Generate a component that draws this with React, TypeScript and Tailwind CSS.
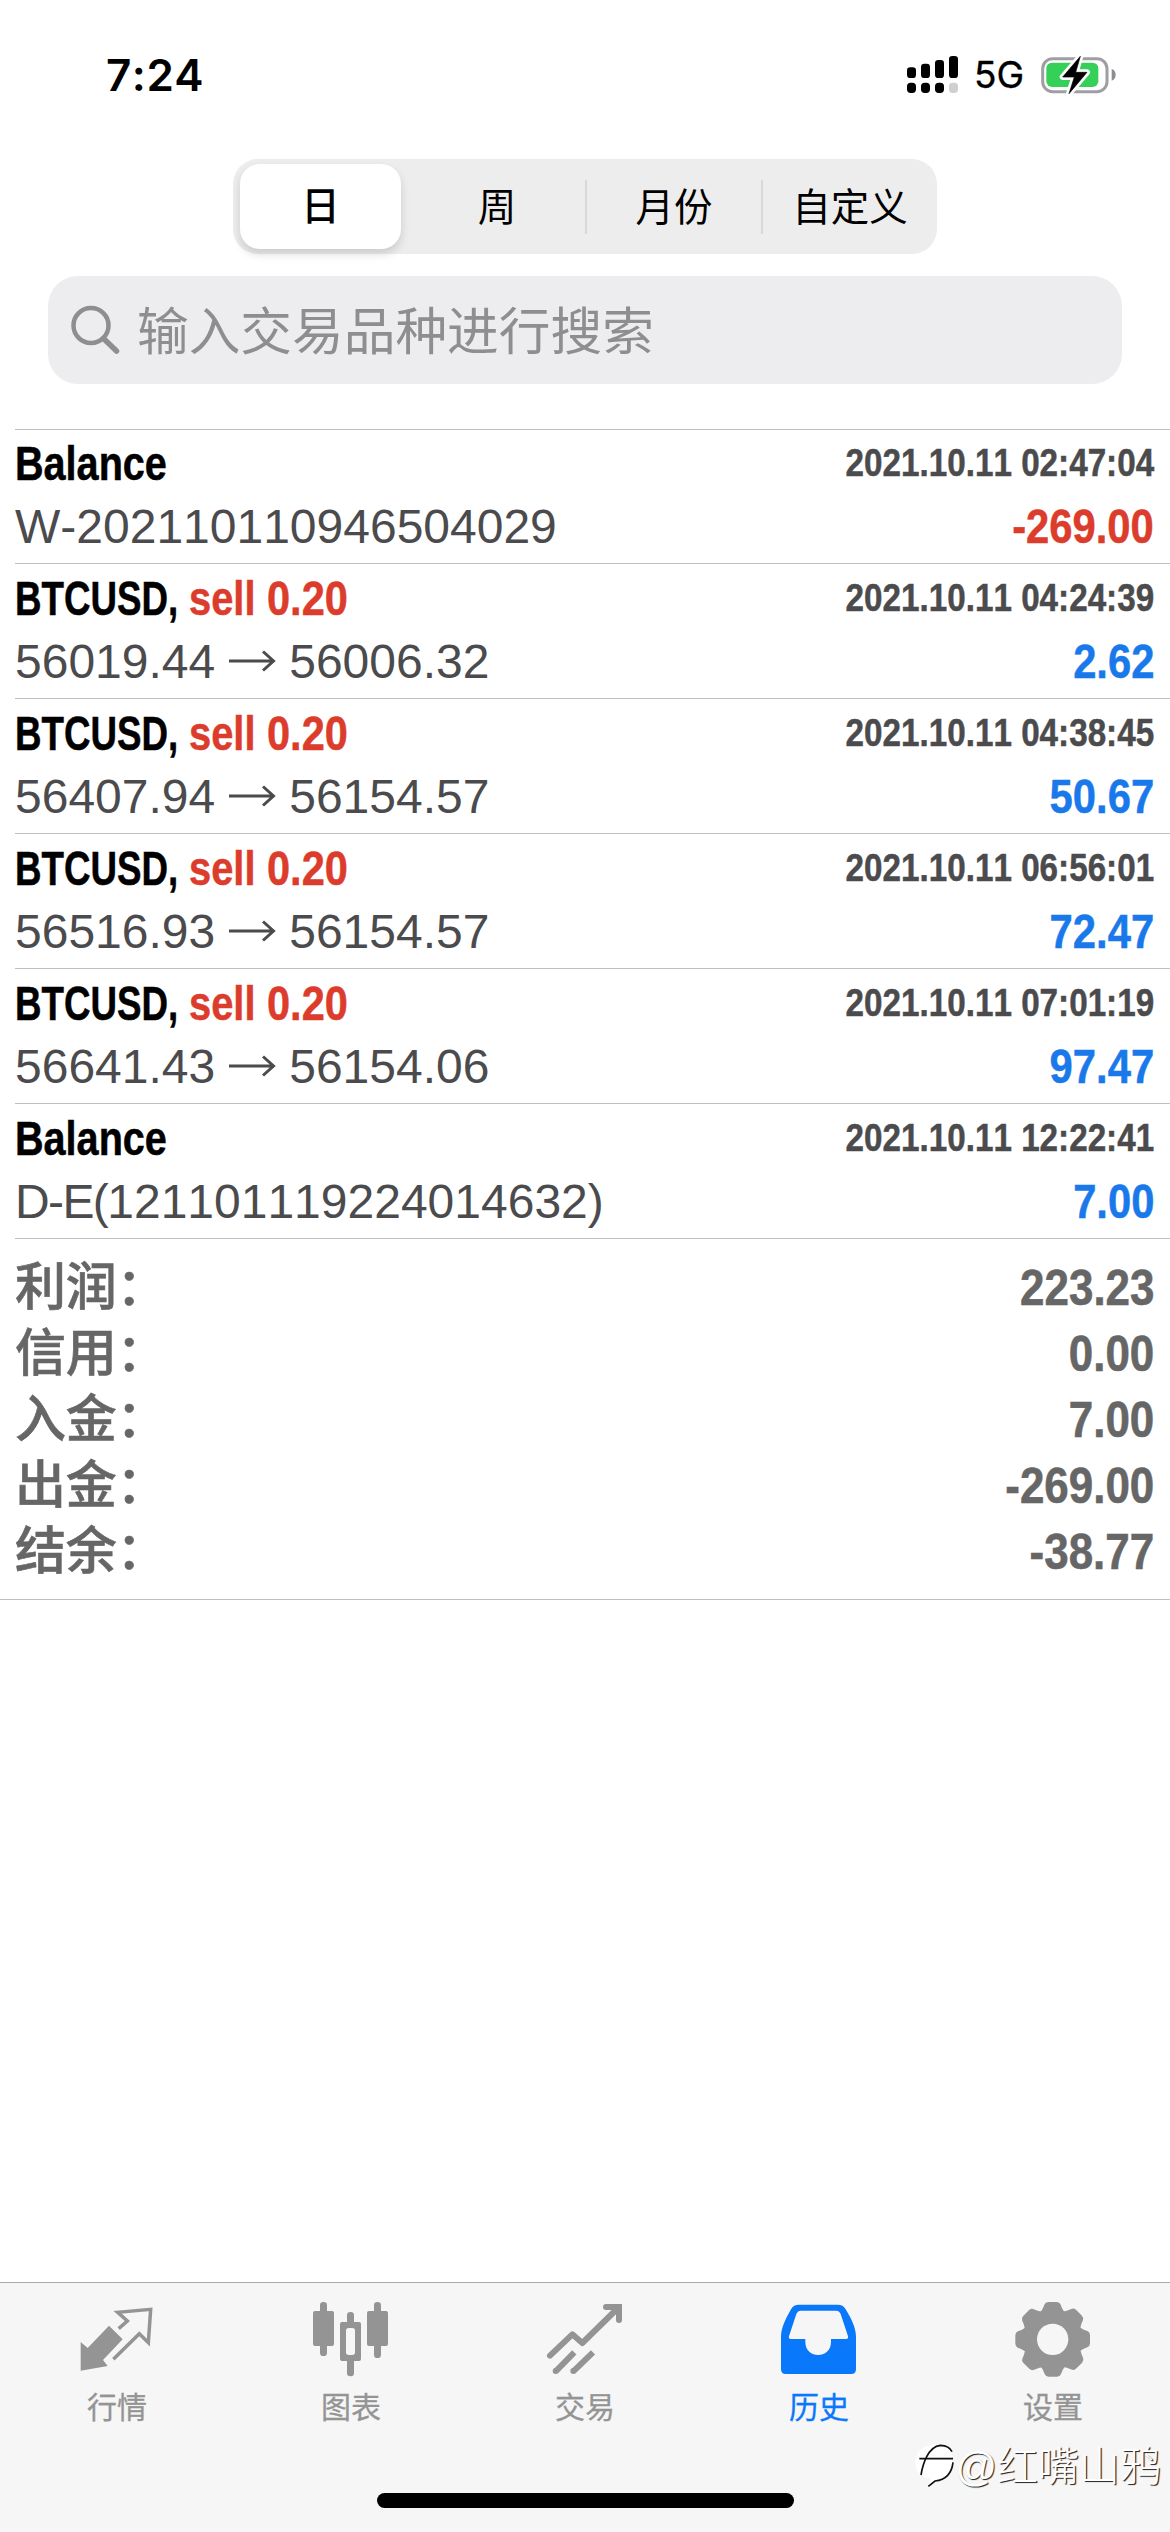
import React from "react";

type Deal = {
  symbol: string;
  side?: string;
  volume?: string;
  time: string;
  from?: string;
  to?: string;
  note?: React.ReactNode;
  profit: string;
};

const deals: Deal[] = [
  { symbol: "Balance", time: "2021.10.11 02:47:04", note: "W-202110110946504029", profit: "-269.00" },
  { symbol: "BTCUSD,", side: "sell", volume: "0.20", time: "2021.10.11 04:24:39", from: "56019.44", to: "56006.32", profit: "2.62" },
  { symbol: "BTCUSD,", side: "sell", volume: "0.20", time: "2021.10.11 04:38:45", from: "56407.94", to: "56154.57", profit: "50.67" },
  { symbol: "BTCUSD,", side: "sell", volume: "0.20", time: "2021.10.11 06:56:01", from: "56516.93", to: "56154.57", profit: "72.47" },
  { symbol: "BTCUSD,", side: "sell", volume: "0.20", time: "2021.10.11 07:01:19", from: "56641.43", to: "56154.06", profit: "97.47" },
  {
    symbol: "Balance",
    time: "2021.10.11 12:22:41",
    note: (
      <span>
        <span className="tracking-[-1.6px]">D-E(</span>121101119224014632)
      </span>
    ),
    profit: "7.00",
  },
];

const totals = [
  { label: "利润：", value: "223.23" },
  { label: "信用：", value: "0.00" },
  { label: "入金：", value: "7.00" },
  { label: "出金：", value: "-269.00" },
  { label: "结余：", value: "-38.77" },
];

const StatusBar = () => (
  <div className="h-[159px] flex justify-between pl-[106px] pr-[54px] pt-[50px]">
    <span className="font-['Inter'] font-semibold text-[44px] leading-[50px] tracking-[0.5px]">7:24</span>
    <div className="flex h-[50px] items-center">
      <svg className="w-[52px] h-[38px]" viewBox="0 0 156 114">
        <rect x="0" y="34" width="27" height="32" rx="10" />
        <rect x="42" y="23" width="27" height="43" rx="10" />
        <rect x="84" y="12" width="27" height="54" rx="10" />
        <rect x="126" y="0" width="27" height="66" rx="10" />
        <rect x="0" y="80" width="27" height="31" rx="11" />
        <rect x="42" y="80" width="27" height="31" rx="11" />
        <rect x="84" y="80" width="27" height="31" rx="11" />
        <rect x="126" y="80" width="27" height="31" rx="11" fill="#cfcfcf" />
      </svg>
      <span className="font-['Inter'] text-[37px] leading-[52px] ml-[15px] w-[66px] [-webkit-text-stroke:0.4px]">5G</span>
      <svg className="w-[76px] h-[40px]" viewBox="478 72 228 120">
        <rect x="486" y="83" width="193" height="99" rx="30" fill="none" stroke="#a19ea3" strokeWidth="9" />
        <rect x="497" y="95" width="156" height="73" rx="17" fill="#35d058" />
        <path d="M693 114c16 4 16 31 0 35z" fill="#8e8c90" />
        <path d="M599 76 546 138h35l-16 50 54-64h-34z" stroke="#fff" strokeWidth="18" strokeLinejoin="round" />
        <path d="M599 76 546 138h35l-16 50 54-64h-34z" stroke="#000" strokeWidth="2" strokeLinejoin="round" />
      </svg>
    </div>
  </div>
);

const Periods = () => (
  <div className="mx-auto w-[704px] h-[95px] rounded-[25px] bg-[#ededed] grid grid-cols-4 items-center text-[38.5px] text-black text-center">
    <div className="ml-[7px] mr-[8px] h-[85px] leading-[86px] rounded-[20px] bg-white font-medium shadow-[0_5px_10px_rgba(0,0,0,0.14)]">日</div>
    <div className="h-[54px] leading-[55px]">周</div>
    <div className="h-[54px] leading-[55px] border-l-2 border-[#d8d8d9]">月份</div>
    <div className="h-[54px] leading-[55px] border-l-2 border-[#d8d8d9]">自定义</div>
  </div>
);

const Search = () => (
  <div className="mx-[48px] mt-[22px] h-[108px] rounded-[30px] bg-[#ededef] flex items-center pl-[23px] text-[#8e8e90]">
    <svg className="w-[50px] h-[50px]" viewBox="0 0 50 50" fill="none" stroke="currentColor">
      <circle cx="20" cy="20.5" r="17.5" strokeWidth="4.5" />
      <path d="M32.5 33.5 45.5 46" strokeWidth="5.5" strokeLinecap="round" />
    </svg>
    <span className="ml-[16px] mt-[3px] text-[51.7px] leading-[60px] whitespace-nowrap">输入交易品种进行搜索</span>
  </div>
);

const DealRow = ({ deal }: { deal: Deal }) => (
  <div className="ml-[15px] pr-[16px] h-[135px] border-t border-[#bfbfc1] pt-[3px] first:h-[134px] first:pt-[2px]">
    <div className="flex justify-between h-[63px] font-bold whitespace-nowrap [-webkit-text-stroke:0.5px]">
      <div className="flex text-[48px] leading-[63px]">
        {deal.side ? (
          <>
            <span className="w-[174px] origin-left scale-x-[0.765] text-black">{deal.symbol}</span>
            <span className="w-[78px] origin-left scale-x-[0.83] text-[#dc3c2c]">{deal.side}</span>
            <span className="w-[81px] origin-left scale-x-[0.865] text-[#dc3c2c]">{deal.volume}</span>
          </>
        ) : (
          <span className="origin-left scale-x-[0.825] text-black">{deal.symbol}</span>
        )}
      </div>
      <span className="origin-right scale-x-[0.852] text-[39px] leading-[61px] text-[#4b4b4d]">{deal.time}</span>
    </div>
    <div className="flex justify-between h-[63px] text-[48px] leading-[63px] whitespace-nowrap">
      <div className="flex items-center text-[#4b4b4d]">
        {deal.note ?? (
          <>
            <span>{deal.from}</span>
            <svg className="w-[48px] h-[22px] mx-[13px] mb-px" viewBox="0 0 48 22" fill="none" stroke="currentColor" strokeWidth="3">
              <path d="M1 11H45M35 1.5 45.5 11 35 20.5" />
            </svg>
            <span>{deal.to}</span>
          </>
        )}
      </div>
      <span
        className={`origin-right scale-x-[0.87] font-bold [-webkit-text-stroke:0.5px] ${
          deal.profit.startsWith("-") ? "text-[#dc3c2c]" : "text-[#1a79ea]"
        }`}
      >
        {deal.profit}
      </span>
    </div>
  </div>
);

const Totals = () => (
  <div className="relative h-[362px] border-b border-[#bfbfc1] pl-[15px] pr-[16px] pt-[17px] text-[#666]">
    <div className="absolute left-[15px] right-0 top-0 h-px bg-[#bfbfc1]" />
    {totals.map((t) => (
      <div key={t.label} className="flex justify-between h-[66px] leading-[66px] whitespace-nowrap [-webkit-text-stroke:0.6px]">
        <span className="text-[51px] font-medium tracking-[-0.3px]">{t.label}</span>
        <span className="origin-right scale-x-[0.87] text-[50.5px] font-bold">{t.value}</span>
      </div>
    ))}
  </div>
);

const QuotesIcon = () => (
  <svg className="size-[80px]" viewBox="81 84 240 240">
    <path d="M177 167 218 208 159 270 173 288 92 302V216L113 234Z" fill="currentColor" />
    <path d="M206 176 232 153 203 127 302 118 295 218 268 191 190 268" fill="none" stroke="currentColor" strokeWidth="10.5" />
  </svg>
);

const ChartIcon = () => (
  <svg className="size-[80px]" viewBox="783 84 240 240" fill="currentColor">
    <rect x="810" y="96" width="21" height="162" rx="10" />
    <rect x="789" y="123" width="63" height="105" rx="6" />
    <rect x="891" y="126" width="21" height="193" rx="10" />
    <rect x="870" y="156" width="63" height="117" rx="6" />
    <rect x="888" y="174" width="27" height="81" rx="8" fill="#f6f6f6" />
    <rect x="972" y="96" width="21" height="168" rx="10" />
    <rect x="951" y="123" width="63" height="105" rx="6" />
  </svg>
);

const TradeIcon = () => (
  <svg className="size-[80px]" viewBox="75 84 240 240" fill="none" stroke="currentColor" strokeWidth="18">
    <path d="M90 257 157 193 187 219 294 114" strokeLinecap="round" strokeLinejoin="round" />
    <path d="M258 111H297V150" strokeLinecap="round" />
    <path d="M107 304 163 247M160 304 219 247" />
    <circle cx="107" cy="303" r="9" fill="currentColor" stroke="none" />
    <circle cx="160" cy="303" r="9" fill="currentColor" stroke="none" />
  </svg>
);

const HistoryIcon = () => (
  <svg className="size-[80px]" viewBox="777 84 240 240">
    <path
      d="M836 104H954Q969 104 976 116C990 139 1008 170 1008 200V298Q1008 312 994 312H797Q783 312 783 298V200C783 170 801 139 814 116Q821 104 836 104Z"
      fill="currentColor"
    />
    <path
      d="M843 122H948Q958 122 962 132L984 199Q986 207 978 207H933V216C933 268 856 268 856 216V207H812Q805 207 807 199L829 132Q833 122 843 122Z"
      fill="#f6f6f6"
    />
  </svg>
);

const GearIcon = () => (
  <svg className="size-[80px]" viewBox="399 84 240 240" fill="currentColor">
    {[0, 45, 90, 135, 180, 225, 270, 315].map((a) => (
      <path key={a} d="M468 140Q486 126 493 104Q496 96 505 96H530Q539 96 542 104Q549 126 567 140Z" transform={`rotate(${a} 518 208)`} />
    ))}
    <circle cx="518" cy="208" r="86" />
    <circle cx="518" cy="208" r="47" fill="#f6f6f6" />
  </svg>
);

const tabs = [
  { label: "行情", icon: <QuotesIcon /> },
  { label: "图表", icon: <ChartIcon /> },
  { label: "交易", icon: <TradeIcon /> },
  { label: "历史", icon: <HistoryIcon />, active: true },
  { label: "设置", icon: <GearIcon /> },
];

const TabBar = () => (
  <div className="relative h-[250px] border-t border-[#a9a9aa] bg-[#f6f6f6]">
    <div className="grid grid-cols-5 pt-[15px]">
      {tabs.map((tab) => (
        <div key={tab.label} className={`flex flex-col items-center ${tab.active ? "text-[#0a78fb]" : "text-[#949494]"}`}>
          {tab.icon}
          <span className="mt-[8px] text-[30px] leading-[44px] [-webkit-text-stroke:0.3px]">{tab.label}</span>
        </div>
      ))}
    </div>
    {/* author mark */}
    <div className="absolute right-[9px] top-[158px] flex items-center text-white">
      <svg className="w-[42px] h-[48px] mb-[3px]" viewBox="96 528 126 144">
        <path d="M150 541C190 534 216 552 216 590C214 625 190 645 160 648L141 663L150 640C120 640 101 615 103 590C106 560 125 545 150 541Z" fill="#fff" />
        <path d="M120 630C125 600 140 545 178 541Q205 542 213 560M115 581H216M216 592C212 628 190 645 162 648L142 664" fill="none" stroke="#111" strokeWidth="5" />
      </svg>
      <span className="text-[41px] leading-[50px] font-light whitespace-nowrap [text-shadow:1.2px_1.2px_0.8px_#222]">@红嘴山鸦</span>
    </div>
    <div className="absolute left-[377px] bottom-[24px] w-[417px] h-[15px] rounded-full bg-black" />
  </div>
);

const App: React.FC = () => {
  return (
    <div className="w-[1170px] h-[2532px] overflow-hidden flex flex-col bg-white text-black [font-kerning:none] font-['Liberation_Sans','Noto_Sans_CJK_SC',sans-serif]">
      <StatusBar />
      <Periods />
      <Search />
      <div className="mt-[45px]">
        {deals.map((deal) => (
          <DealRow key={deal.time} deal={deal} />
        ))}
      </div>
      <Totals />
      <div className="flex-1" />
      <TabBar />
    </div>
  );
};

export default App;
